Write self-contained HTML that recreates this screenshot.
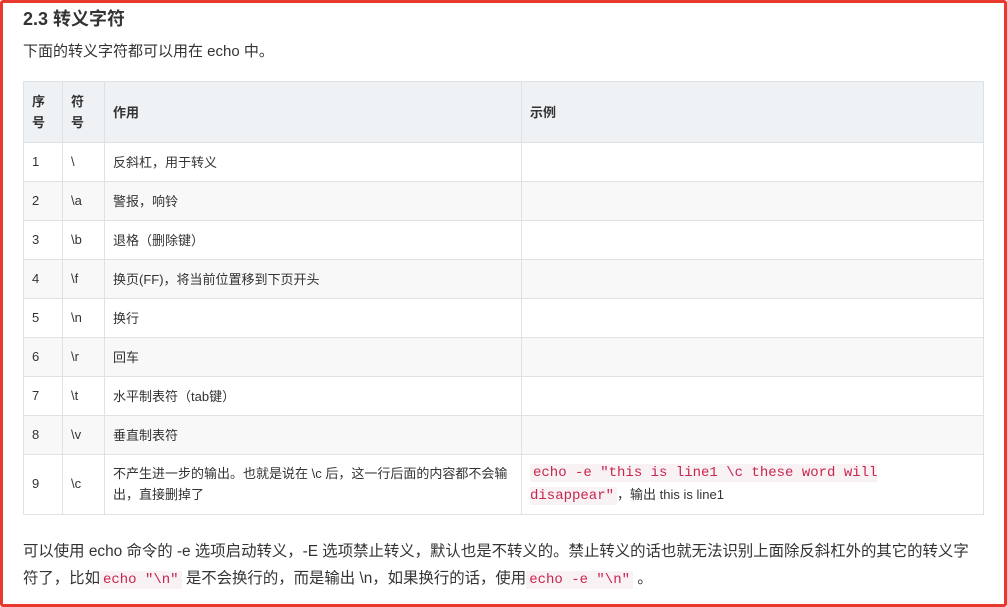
<!DOCTYPE html>
<html><head><meta charset="utf-8"><style>
*{margin:0;padding:0;box-sizing:border-box}
body{width:1007px;height:607px;background:#fff;font-family:"Liberation Sans","Noto Sans CJK SC",sans-serif;color:#333;position:relative;overflow:hidden}
.frame{position:absolute;left:0;top:0;width:1007px;height:607px;border:3px solid #e8392f;border-radius:3px}
h2{position:absolute;left:23px;top:5px;font-size:18px;font-weight:bold;color:#333}
.p{position:absolute;left:23px;font-size:15px;color:#333}
table{position:absolute;left:23px;top:81px;width:961px;border-collapse:collapse;font-size:13px}
td,th{border:1px solid #dfe2e5;padding:0 8px;text-align:left;vertical-align:middle}
th{background:#eff2f5;height:61px;font-weight:bold;line-height:21px}
td{height:39px;padding-bottom:2px}
tr:nth-child(odd) td{background:#f8f8f8}
tr:first-child td{background:#fff}
code{font-family:"Liberation Mono",monospace;color:#c7254e;background:#f9f2f4;font-size:14px;padding:1px 3px}
</style></head><body>
<div class="frame"></div>
<h2>2.3 转义字符</h2>
<div class="p" style="top:40px">下面的转义字符都可以用在 echo 中。</div>
<table>
<tr><th style="width:39px">序<br>号</th><th style="width:42px">符<br>号</th><th style="width:417px">作用</th><th>示例</th></tr>
<tr><td>1</td><td>\</td><td>反斜杠，用于转义</td><td></td></tr>
<tr><td>2</td><td>\a</td><td>警报，响铃</td><td></td></tr>
<tr><td>3</td><td>\b</td><td>退格（删除键）</td><td></td></tr>
<tr><td>4</td><td>\f</td><td>换页(FF)，将当前位置移到下页开头</td><td></td></tr>
<tr><td>5</td><td>\n</td><td>换行</td><td></td></tr>
<tr><td>6</td><td>\r</td><td>回车</td><td></td></tr>
<tr><td>7</td><td>\t</td><td>水平制表符（tab键）</td><td></td></tr>
<tr><td>8</td><td>\v</td><td>垂直制表符</td><td></td></tr>
<tr><td style="height:60px">9</td><td>\c</td><td style="line-height:21px;padding-right:12px">不产生进一步的输出。也就是说在 \c 后，这一行后面的内容都不会输出，直接删掉了</td><td style="line-height:22px"><code>echo -e "this is line1 \c these word will disappear"</code>，输出 this is line1</td></tr>
</table>
<div class="p" style="top:538px;width:955px;line-height:27px;font-size:15.4px">可以使用 echo 命令的 -e 选项启动转义，-E 选项禁止转义，默认也是不转义的。禁止转义的话也就无法识别上面除反斜杠外的其它的转义字符了，比如<code>echo "\n"</code> 是不会换行的，而是输出 \n，如果换行的话，使用<code>echo -e "\n"</code> 。</div>
</body></html>
